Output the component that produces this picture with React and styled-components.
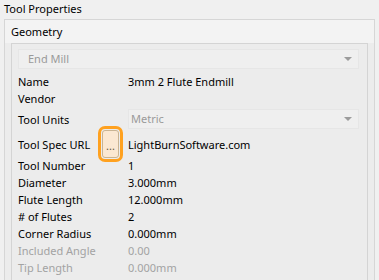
import React from "react";
import styled, { createGlobalStyle } from "styled-components";

const GlobalStyle = createGlobalStyle`
  html, body {
    margin: 0;
    padding: 0;
    background: #f0f0f0;
    font-family: "Noto Sans", "Open Sans", sans-serif;
    font-size: 11px;
    color: #000;
    overflow: hidden;
  }
`;

const Panel = styled.div`
  width: 379px;
  height: 280px;
  overflow: hidden;
`;

const PanelTitle = styled.div`
  height: 19px;
  line-height: 17px;
  padding-left: 4px;
`;

const OuterGroup = styled.div`
  margin: 0 4px 0 4px;
  border: 1px solid #d6d6d6;
  border-bottom: none;
  background: #ececec;
  height: 300px;
`;

const GroupTitle = styled.div`
  height: 23px;
  line-height: 24px;
  padding-left: 6px;
  background: #f3f3f3;
`;

const InnerGroup = styled.div`
  margin: 0 6px 0 6px;
  border: 1px solid #d4d4d4;
  border-bottom: none;
  padding: 5px 8px 0 6px;
  height: 280px;
`;

const Combo = styled.div`
  position: relative;
  height: 18px;
  line-height: 18px;
  padding-left: ${(p) => p.$pad || 9}px;
  background: #efefef;
  border: 1px solid #e6e6e6;
  color: #9a9a9a;
  flex: 1;
`;

const Arrow = styled.span`
  position: absolute;
  right: 6px;
  top: 7px;
  width: 0;
  height: 0;
  border-left: 4px solid transparent;
  border-right: 4px solid transparent;
  border-top: 4px solid #9c9c9c;
`;

const Rows = styled.div`
  margin-top: 4px;
`;

const Row = styled.div`
  display: flex;
  align-items: center;
  height: ${(p) => p.$h || 17}px;
  color: ${(p) => (p.$disabled ? "#a3a3a3" : "#000")};
`;

const Label = styled.div`
  width: 110px;
  flex-shrink: 0;
  white-space: nowrap;
`;

const Value = styled.div`
  flex: 1;
  display: flex;
  align-items: center;
  white-space: nowrap;
`;

const BrowseButton = styled.button`
  position: relative;
  left: -26px;
  width: 17px;
  height: 28px;
  margin-right: -17px;
  padding: 0;
  border: 1px solid #c9b493;
  border-radius: 3px;
  background: #fbe8d2;
  outline: 3px solid #ffa11f;
  outline-offset: 1px;
  font-family: inherit;
  font-size: 11px;
  line-height: 1;
  color: #6a5a40;
  display: flex;
  align-items: flex-end;
  justify-content: center;
  padding-bottom: 6px;
`;

const rows = [
  { label: "Name", value: "3mm 2 Flute Endmill" },
  { label: "Vendor", value: "" },
];

const measures = [
  { label: "Tool Number", value: "1" },
  { label: "Diameter", value: "3.000mm" },
  { label: "Flute Length", value: "12.000mm" },
  { label: "# of Flutes", value: "2" },
  { label: "Corner Radius", value: "0.000mm" },
  { label: "Included Angle", value: "0.00", disabled: true },
  { label: "Tip Length", value: "0.000mm", disabled: true },
];

export default function App() {
  return (
    <Panel>
      <GlobalStyle />
      <PanelTitle>Tool Properties</PanelTitle>
      <OuterGroup>
        <GroupTitle>Geometry</GroupTitle>
        <InnerGroup>
          <Combo>
            End Mill
            <Arrow />
          </Combo>
          <Rows>
            {rows.map((r) => (
              <Row key={r.label}>
                <Label>{r.label}</Label>
                <Value>{r.value}</Value>
              </Row>
            ))}
            <Row $h={24}>
              <Label>Tool Units</Label>
              <Combo $pad={2}>
                Metric
                <Arrow />
              </Combo>
            </Row>
            <Row $h={26}>
              <Label>Tool Spec URL</Label>
              <Value>
                <BrowseButton>...</BrowseButton>
                LightBurnSoftware.com
              </Value>
            </Row>
            {measures.map((r) => (
              <Row key={r.label} $disabled={r.disabled}>
                <Label>{r.label}</Label>
                <Value>{r.value}</Value>
              </Row>
            ))}
          </Rows>
        </InnerGroup>
      </OuterGroup>
    </Panel>
  );
}
